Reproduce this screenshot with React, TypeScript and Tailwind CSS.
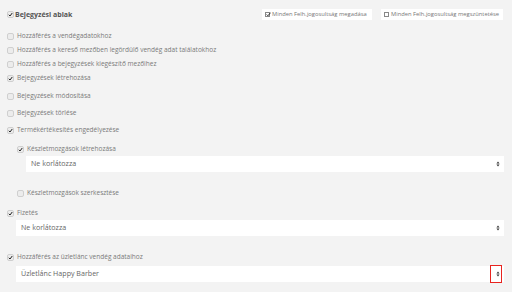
import React from "react";

const font = { fontFamily: '"Open Sans", "Noto Sans", sans-serif' };

function Box({ checked }: { checked?: boolean }) {
  return (
    <span className="relative inline-flex h-[7px] w-[7px] shrink-0 items-center justify-center rounded-[2px] border border-[#cfcfcf] bg-[#ececec]">
      {checked && (
        <svg viewBox="0 0 8 8" className="absolute left-[0px] top-[0px] h-[5px] w-[5px]">
          <path d="M1.2 4.4 L3.2 6.4 L6.8 1.6" fill="none" stroke="#222" strokeWidth="1.6" />
        </svg>
      )}
    </span>
  );
}

function Row({ checked, label, indent, mt }: { checked?: boolean; label: string; indent?: boolean; mt: string }) {
  return (
    <div className={`flex h-[14px] items-center gap-[3px] ${indent ? "pl-[10px]" : ""} ${mt}`}>
      <Box checked={checked} />
      <span className="whitespace-nowrap text-[6.5px] leading-none text-[#7a7a7a]">{label}</span>
    </div>
  );
}

function Select({ text, indent, mt, highlight }: { text: string; indent?: boolean; mt: string; highlight?: boolean }) {
  return (
    <div className={`${indent ? "ml-[19px]" : "ml-[9px]"} ${mt}`}>
      <div className="relative flex h-[16px] items-center justify-between bg-white pl-[5px] pr-[4px]">
        <span className="text-[7.1px] leading-none text-[#666]">{text}</span>
        <svg viewBox="0 0 4 7" className="h-[6px] w-[4px]">
          <path d="M0.2 2.8 L2 0.6 L3.8 2.8 Z" fill="#333" />
          <path d="M0.2 4.2 L2 6.4 L3.8 4.2 Z" fill="#333" />
        </svg>
        {highlight && (
          <div className="absolute right-[2px] top-[-1px] h-[18px] w-[12px] border border-[#e8231f]" />
        )}
      </div>
    </div>
  );
}

function TopBtn({ checked, label, w }: { checked?: boolean; label: string; w: string }) {
  return (
    <div className={`flex h-[11px] ${w} items-center gap-[2px] overflow-hidden whitespace-nowrap bg-white pl-[3px]`}>
      <span className="relative inline-block h-[5px] w-[5px] shrink-0 border border-[#888] bg-white">
        {checked && (
          <svg viewBox="0 0 6 6" className="absolute left-[0px] top-[-1px] h-[5px] w-[5px]">
            <path d="M0.8 3 L2.3 4.5 L5.5 0.8" fill="none" stroke="#222" strokeWidth="1.1" />
          </svg>
        )}
      </span>
      <span className="text-[5.8px] leading-none text-[#777]">{label}</span>
    </div>
  );
}

export default function App() {
  return (
    <div className="h-[292px] w-[512px] overflow-hidden bg-[#f3f3f3] pl-[7px] pr-[8px]" style={font}>
      <div className="mt-[9px] flex h-[11px] items-center justify-between">
        <div className="flex items-center gap-[1px]">
          <Box checked />
          <span className="text-[7px] font-bold leading-none text-[#555]">Bejegyzési ablak</span>
        </div>
        <div className="flex items-center gap-[9px] pr-[1px]">
          <TopBtn checked label="Minden Felh.jogosultság megadása" w="w-[110px]" />
          <TopBtn label="Minden Felh.jogosultság megszüntetése" w="w-[122px]" />
        </div>
      </div>
      <Row label="Hozzáférés a vendégadatokhoz" mt="mt-[9px]" />
      <Row label="Hozzáférés a kereső mezőben legördülő vendég adat találatokhoz" mt="mt-0" />
      <Row label="Hozzáférés a bejegyzések kiegészítő mezőihez" mt="mt-0" />
      <Row checked label="Bejegyzések létrehozása" mt="mt-0" />
      <Row label="Bejegyzések módosítása" mt="mt-[4px]" />
      <Row label="Bejegyzések törlése" mt="mt-[3px]" />
      <Row checked label="Termékértékesítés engedélyezése" mt="mt-[3px]" />
      <Row checked indent label="Készletmozgások létrehozása" mt="mt-[5px]" />
      <Select indent text="Ne korlátozza" mt="mt-0" />
      <Row indent label="Készletmozgások szerkesztése" mt="mt-[14px]" />
      <Row checked label="Fizetés" mt="mt-[6px]" />
      <Select text="Ne korlátozza" mt="mt-0" />
      <Row checked label="Hozzáférés az üzletlánc vendég adataihoz" mt="mt-[14px]" />
      <Select text="Üzletlánc Happy Barber" mt="mt-[2px]" highlight />
    </div>
  );
}
